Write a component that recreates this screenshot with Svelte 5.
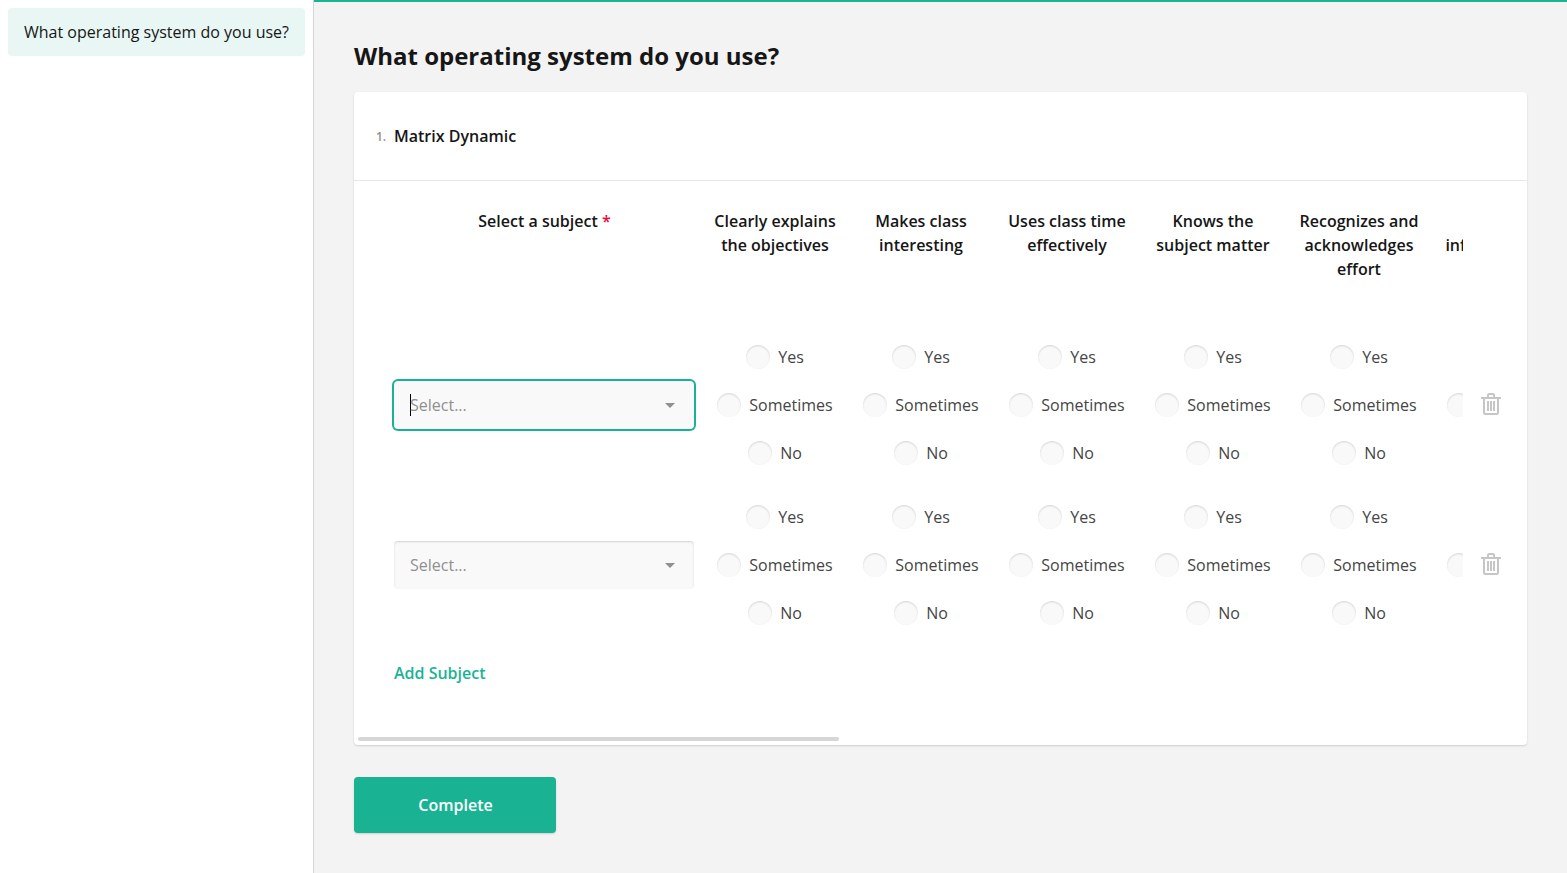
<script>
  const columns = [
    'Clearly explains the objectives',
    'Makes class interesting',
    'Uses class time effectively',
    'Knows the subject matter',
    'Recognizes and acknowledges effort',
    'Keeps me informed of my progress'
  ];
  const choices = ['Yes', 'Sometimes', 'No'];
  const rows = [{ focused: true }, { focused: false }];
</script>

<div class="survey">
  <aside>
    <div class="toc-item">What operating system do you use?</div>
  </aside>
  <main>
    <h1>What operating system do you use?</h1>
    <section class="card">
      <header><span class="number">1.</span><h2>Matrix Dynamic</h2></header>
      <div class="content">
        <div class="body">
          <div class="viewport">
            <div class="row head">
              <div class="subject">Select a subject <span class="required">*</span></div>
              {#each columns as title}
                <div class="cell">{title}</div>
              {/each}
            </div>
            {#each rows as row}
              <div class="row">
                <div class="subject">
                  <div class="select" class:focused={row.focused}>
                    <span class="placeholder">Select...</span>
                    <svg width="10" height="5" viewBox="0 0 10 5"><path d="M0 0H10L5 5Z" fill="#909090" /></svg>
                  </div>
                </div>
                {#each columns as _}
                  <div class="cell">
                    {#each choices as choice}
                      <div class="choice"><i></i><span>{choice}</span></div>
                    {/each}
                  </div>
                {/each}
              </div>
            {/each}
          </div>
          <div class="actions">
            {#each rows as _}
              <div class="remove">
                <svg width="20" height="22" viewBox="0 0 20 22" fill="none" stroke="#c6c6c6" stroke-width="2">
                  <path d="M0 5H20M7 5V2.5Q7 1 8.500 1H11.500Q13 1 13 2.500V5M3 5V19.500Q3 21 4.500 21H15.500Q17 21 17 19.500V5M7 8V18M10 8V18M13 8V18" />
                </svg>
              </div>
            {/each}
          </div>
        </div>
        <div class="add">Add Subject</div>
        <div class="scrollbar"></div>
      </div>
    </section>
    <div class="complete">Complete</div>
  </main>
</div>

<style>
  :global(body) { margin: 0; overflow: hidden; }
  .survey {
    display: flex;
    height: 873px;
    font: 400 16px/24px 'Open Sans', sans-serif;
    color: #161616;
    background: #f3f3f3;
  }
  * { box-sizing: border-box; }
  aside {
    width: 314px;
    flex: none;
    padding: 8px;
    background: #fff;
    border-right: 1px solid #d6d6d6;
  }
  .toc-item {
    padding: 12px 16px;
    border-radius: 4px;
    background: #e8f7f4;
    white-space: nowrap;
  }
  main {
    flex: 1;
    min-width: 0;
    padding: 38px 40px 0;
    border-top: 2px solid #19b394;
  }
  h1 { margin: 0 0 20px; font-size: 24px; line-height: 32px; font-weight: 700; }
  .card {
    height: 653px;
    border-radius: 4px;
    background: #fff;
    box-shadow: 0 1px 2px rgba(0, 0, 0, 0.15);
  }
  header {
    display: flex;
    height: 89px;
    padding: 32px 22px 0;
    gap: 8px;
    border-bottom: 1px solid #e7e7e7;
  }
  .number { width: 10px; padding-top: 1px; font-size: 12px; font-weight: 600; color: #909090; white-space: nowrap; }
  h2 { margin: 0; font-size: 16px; line-height: 24px; font-weight: 600; }
  .content { display: flex; flex-direction: column; height: 564px; }
  .body { display: flex; padding-left: 38px; }
  .viewport { width: 1071px; overflow: hidden; }
  .row { display: flex; width: 1194px; height: 160px; align-items: center; }
  .head { height: 144px; padding-top: 28px; align-items: flex-start; font-weight: 600; text-align: center; }
  .subject { width: 304px; padding: 0 2px; margin-right: 6px; flex: none; }
  .head .subject { padding-left: 3px; }
  .required { color: #e60a3e; }
  .cell { width: 146px; flex: none; padding: 0 8px; }
  .select {
    display: flex;
    align-items: center;
    justify-content: space-between;
    height: 48px;
    padding: 0 19px 0 16px;
    border-radius: 4px;
    background: #f9f9f9;
    box-shadow: inset 0 1px 2px rgba(0, 0, 0, 0.15);
    color: #909090;
  }
  .focused { box-shadow: 0 0 0 2px #19b394; }
  .placeholder { display: flex; align-items: center; }
  .focused .placeholder::before { content: ''; width: 1px; height: 22px; margin-right: -1px; background: #000; }
  .choice {
    display: flex;
    align-items: center;
    justify-content: center;
    gap: 8px;
    height: 48px;
    color: #454545;
  }
  .choice i {
    width: 24px;
    height: 24px;
    flex: none;
    border-radius: 50%;
    background: #f9f9f9;
    box-shadow: inset 0 1px 2px rgba(0, 0, 0, 0.15);
  }
  .actions { padding: 144px 0 0 18px; }
  .remove { display: flex; height: 160px; align-items: center; padding-bottom: 2px; }
  .add { padding: 16px 40px 0; font-weight: 600; color: #19b394; }
  .scrollbar { width: 481px; height: 4px; margin: auto 0 4px 4px; border-radius: 2px; background: #d6d6d6; }
  .complete {
    width: 202px;
    height: 56px;
    margin-top: 32px;
    padding-left: 1px;
    border-radius: 4px;
    background: #19b394;
    box-shadow: 0 1px 2px rgba(0, 0, 0, 0.15);
    color: #fff;
    font-weight: 600;
    line-height: 56px;
    text-align: center;
  }
</style>
